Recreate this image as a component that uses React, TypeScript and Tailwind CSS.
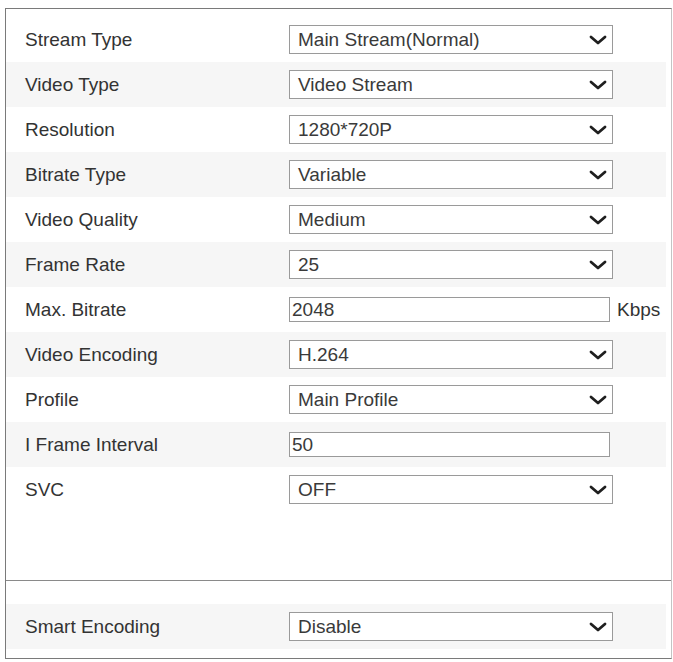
import React from 'react';

type Field = {
    label: string;
    value: string;
    kind: 'select' | 'input';
    unit?: string;
};

const fields: Field[] = [
    { label: 'Stream Type', value: 'Main Stream(Normal)', kind: 'select' },
    { label: 'Video Type', value: 'Video Stream', kind: 'select' },
    { label: 'Resolution', value: '1280*720P', kind: 'select' },
    { label: 'Bitrate Type', value: 'Variable', kind: 'select' },
    { label: 'Video Quality', value: 'Medium', kind: 'select' },
    { label: 'Frame Rate', value: '25', kind: 'select' },
    { label: 'Max. Bitrate', value: '2048', kind: 'input', unit: 'Kbps' },
    { label: 'Video Encoding', value: 'H.264', kind: 'select' },
    { label: 'Profile', value: 'Main Profile', kind: 'select' },
    { label: 'I Frame Interval', value: '50', kind: 'input' },
    { label: 'SVC', value: 'OFF', kind: 'select' },
];

const Chevron = () => (
    <svg width="18" height="10" viewBox="0 0 18 10" className="shrink-0">
        <path d="M2 2 L9 8 L16 2" fill="none" stroke="#1f1f1f" strokeWidth="2.8" strokeLinecap="round" strokeLinejoin="round" />
    </svg>
);

const FakeSelect = ({ value }: { value: string }) => (
    <div className="w-[324px] h-[29px] border border-[#9a9a9a] bg-white flex items-center justify-between pl-[8px] pr-[5px]">
        <span className="text-[#3a3a3a]">{value}</span>
        <Chevron />
    </div>
);

const FakeInput = ({ value }: { value: string }) => (
    <div className="w-[321px] h-[25px] border border-[#9a9a9a] bg-white flex items-center pl-[2px]">
        <span className="text-[#3a3a3a]">{value}</span>
    </div>
);

const Row = ({ field, shaded }: { field: Field; shaded: boolean }) => (
    <div className={`h-[45px] mr-[5px] flex items-center ${shaded ? 'bg-[#f6f6f6]' : 'bg-white'}`}>
        <div className="w-[283px] shrink-0 pl-[19px] text-[#333]">{field.label}</div>
        {field.kind === 'select' ? <FakeSelect value={field.value} /> : <FakeInput value={field.value} />}
        {field.unit && <span className="ml-[7px] text-[#333]">{field.unit}</span>}
    </div>
);

export default function App() {
    return (
        <div className="bg-white min-h-[662px] pt-[8px] pl-[5px]" style={{ fontFamily: '"Liberation Sans", Arial, sans-serif' }}>
            <div className="w-[667px] border border-[#7a7a7a] border-r-[#c4c4c4] text-[19px] leading-none">
                <div className="pt-[8px] pb-[68px]">
                    {fields.map((f, i) => (
                        <Row key={f.label} field={f} shaded={i % 2 === 1} />
                    ))}
                </div>
                <div className="border-t border-[#8a8a8a] pt-[23px] pb-[9px]">
                    <Row field={{ label: 'Smart Encoding', value: 'Disable', kind: 'select' }} shaded={true} />
                </div>
            </div>
        </div>
    );
}
